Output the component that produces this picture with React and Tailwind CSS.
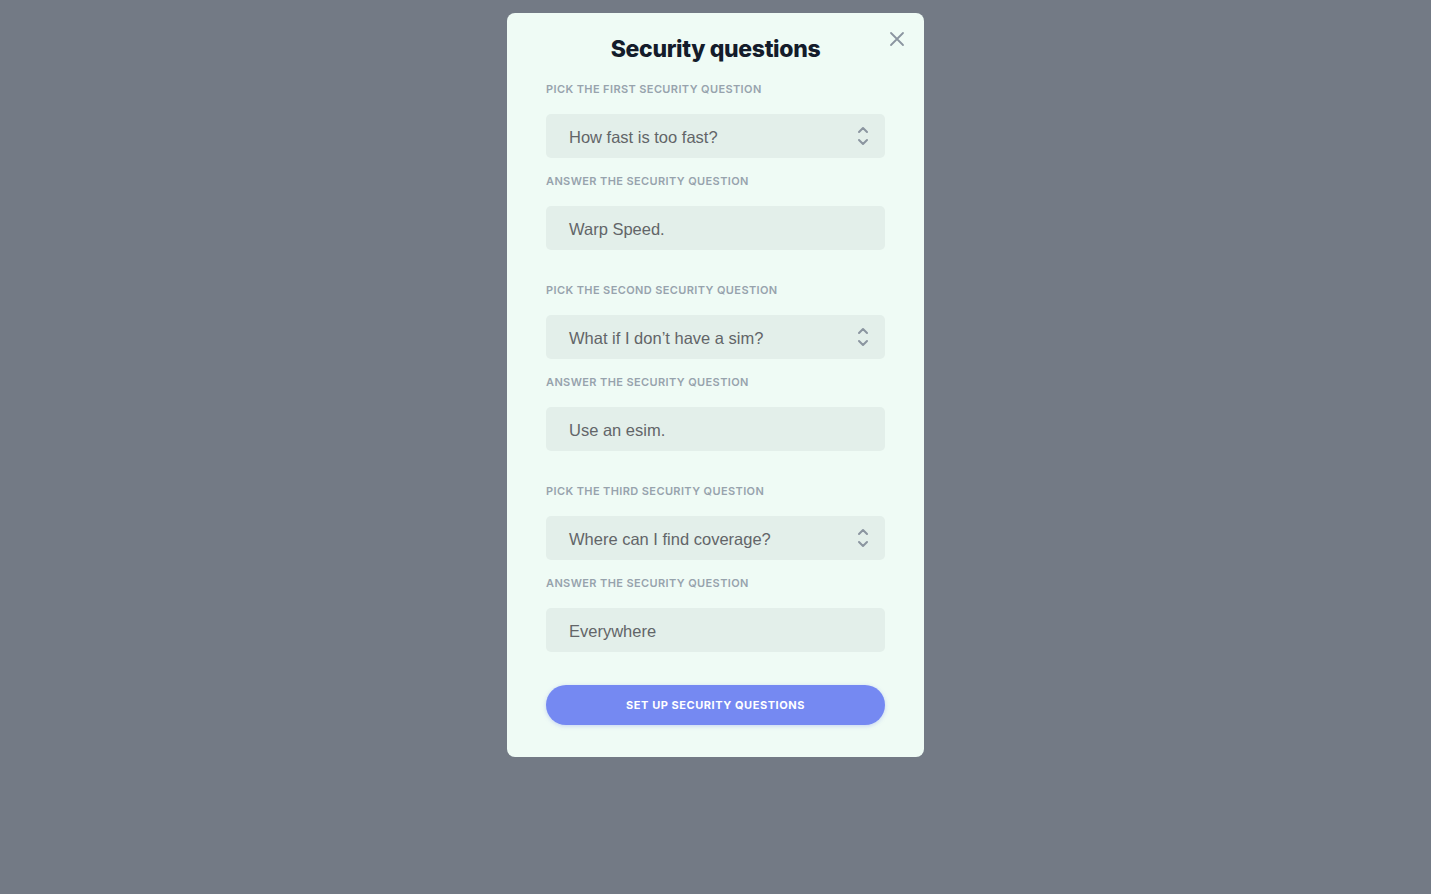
import React from 'react';

const groups = [
  { pick: 'Pick the first security question', question: 'How fast is too fast?', answer: 'Warp Speed.' },
  { pick: 'Pick the second security question', question: 'What if I don’t have a sim?', answer: 'Use an esim.' },
  { pick: 'Pick the third security question', question: 'Where can I find coverage?', answer: 'Everywhere' },
];

const Label = ({ children }) => (
  <div className="text-[11px] leading-[14px] font-semibold uppercase tracking-[0.035em] text-[#97a3ad] font-['Inter',sans-serif]">
    {children}
  </div>
);

const SelectBox = ({ value }) => (
  <div className="h-[44px] rounded-[5px] bg-[#e3efea] flex items-center justify-between pl-[23px] pr-[15px]">
    <span className="pt-[2px] text-[16.5px] text-[#626568] font-['Liberation_Sans',Arial,sans-serif]">{value}</span>
    <svg width="14" height="24" viewBox="0 0 14 24" fill="none" stroke="#8b95a0" strokeWidth="2" strokeLinecap="round" strokeLinejoin="round">
      <path d="M3 8l4-4 4 4" />
      <path d="M3 16l4 4 4-4" />
    </svg>
  </div>
);

const InputBox = ({ value }) => (
  <div className="h-[44px] rounded-[5px] bg-[#e3efea] flex items-center pl-[23px]">
    <span className="pt-[2px] text-[16.5px] text-[#626568] font-['Liberation_Sans',Arial,sans-serif]">{value}</span>
  </div>
);

const App = () => {
  return (
    <div className="min-h-screen bg-[#737a85] flex justify-center pt-[13px]">
      <div className="w-[417px] h-[744px] bg-[#effbf5] rounded-[8px] px-[39px] pt-[20px] relative">
        <button className="absolute right-[19px] top-[18px] flex text-[#8b95a0]">
          <svg width="16" height="16" viewBox="0 0 16 16" fill="none" stroke="currentColor" strokeWidth="1.8" strokeLinecap="round">
            <path d="M2 2l12 12M14 2L2 14" />
          </svg>
        </button>
        <h1 className="text-center text-[23px] leading-[32px] font-extrabold text-[#141c2b] font-['Inter',sans-serif] tracking-[-0.015em]">
          Security questions
        </h1>
        <div className="mt-[17px] flex flex-col gap-[33px]">
          {groups.map((g) => (
            <div key={g.pick} className="flex flex-col">
              <Label>{g.pick}</Label>
              <div className="mt-[18px]">
                <SelectBox value={g.question} />
              </div>
              <div className="mt-[16px]">
                <Label>Answer the security question</Label>
              </div>
              <div className="mt-[18px]">
                <InputBox value={g.answer} />
              </div>
            </div>
          ))}
        </div>
        <button className="mt-[33px] w-full h-[40px] rounded-full bg-[#7589f2] shadow-[0_1px_4px_rgba(117,137,242,0.35)] text-white text-[11px] font-bold uppercase tracking-[0.05em] font-['Inter',sans-serif]">
          Set up security questions
        </button>
      </div>
    </div>
  );
};

export default App;
